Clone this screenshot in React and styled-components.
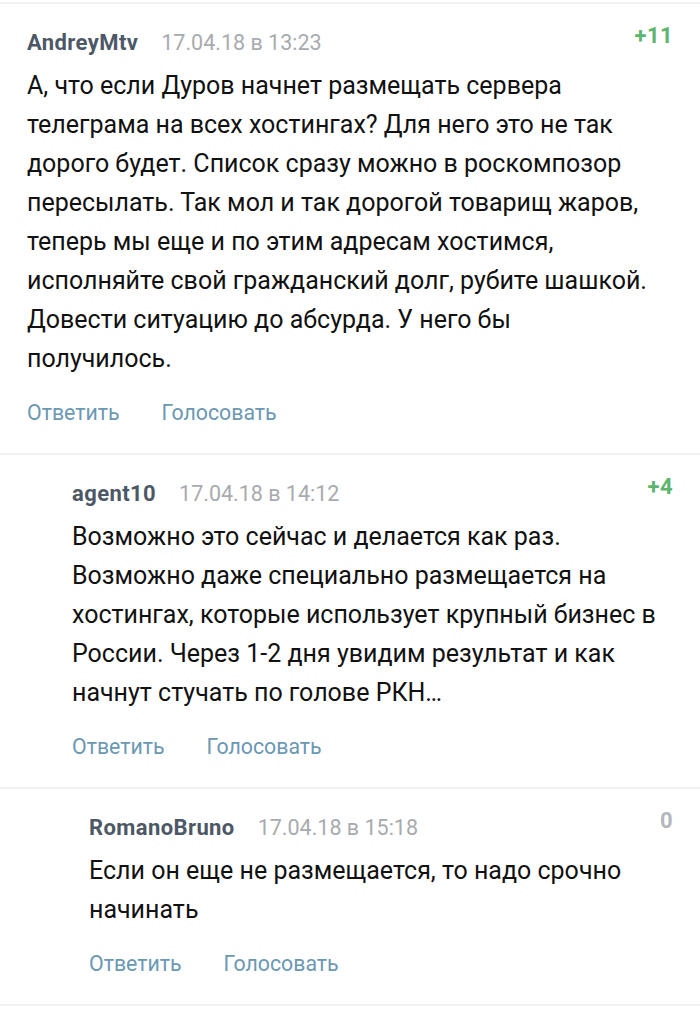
import React from "react";
import styled, { createGlobalStyle } from "styled-components";

const Global = createGlobalStyle`
  html, body { margin: 0; padding: 0; background: #fff; }
  body { font-family: Roboto, "Noto Sans", sans-serif; -webkit-font-smoothing: antialiased; }
`;

const Page = styled.div`
  width: 700px;
  padding-top: 2px;
  display: flex;
  flex-direction: column;
  border-bottom: 2px solid #f1f1f1;
`;

const Comment = styled.div`
  border-top: 2px solid #f1f1f1;
  padding: 26px 24px 26px ${(p) => 27 + p.$indent}px;
  display: flex;
  flex-direction: column;
`;

const Header = styled.div`
  display: flex;
  align-items: center;
  height: 24px;
  gap: 23px;
`;

const User = styled.span`
  font-weight: 700;
  font-size: 22px;
  letter-spacing: 0.4px;
  color: #4d5866;
`;

const DateText = styled.span`
  font-size: 21.5px;
  color: #a8abae;
`;

const Score = styled.span`
  margin-left: auto;
  margin-right: 3px;
  margin-top: -14px;
  font-weight: 700;
  font-size: 22px;
  letter-spacing: 0.4px;
  color: ${(p) => (p.$zero ? "#b3b7bb" : "#5db56e")};
`;

const Body = styled.div`
  margin-top: 12px;
  margin-right: 18px;
  font-size: 25px;
  line-height: 39px;
  color: #111;
`;

const Actions = styled.div`
  margin-top: 19px;
  display: flex;
  gap: 42px;
  height: 30px;
  align-items: center;
`;

const Action = styled.span`
  font-size: 21.3px;
  color: #6b98b3;
`;

const comments = [
  {
    user: "AndreyMtv",
    date: "17.04.18 в 13:23",
    score: "+11",
    indent: 0,
    text: "А, что если Дуров начнет размещать сервера телеграма на всех хостингах? Для него это не так дорого будет. Список сразу можно в роскомпозор пересылать. Так мол и так дорогой товарищ жаров, теперь мы еще и по этим адресам хостимся, исполняйте свой гражданский долг, рубите шашкой. Довести ситуацию до абсурда. У него бы получилось.",
  },
  {
    user: "agent10",
    date: "17.04.18 в 14:12",
    score: "+4",
    indent: 45,
    text: "Возможно это сейчас и делается как раз. Возможно даже специально размещается на хостингах, которые использует крупный бизнес в России. Через 1-2 дня увидим результат и как начнут стучать по голове РКН…",
  },
  {
    user: "RomanoBruno",
    date: "17.04.18 в 15:18",
    score: "0",
    indent: 62,
    text: "Если он еще не размещается, то надо срочно начинать",
  },
];

export default function App() {
  return (
    <Page>
      <Global />
      {comments.map((c) => (
        <Comment key={c.user} $indent={c.indent}>
          <Header>
            <User>{c.user}</User>
            <DateText>{c.date}</DateText>
            <Score $zero={c.score === "0"}>{c.score}</Score>
          </Header>
          <Body>{c.text}</Body>
          <Actions>
            <Action>Ответить</Action>
            <Action>Голосовать</Action>
          </Actions>
        </Comment>
      ))}
    </Page>
  );
}
